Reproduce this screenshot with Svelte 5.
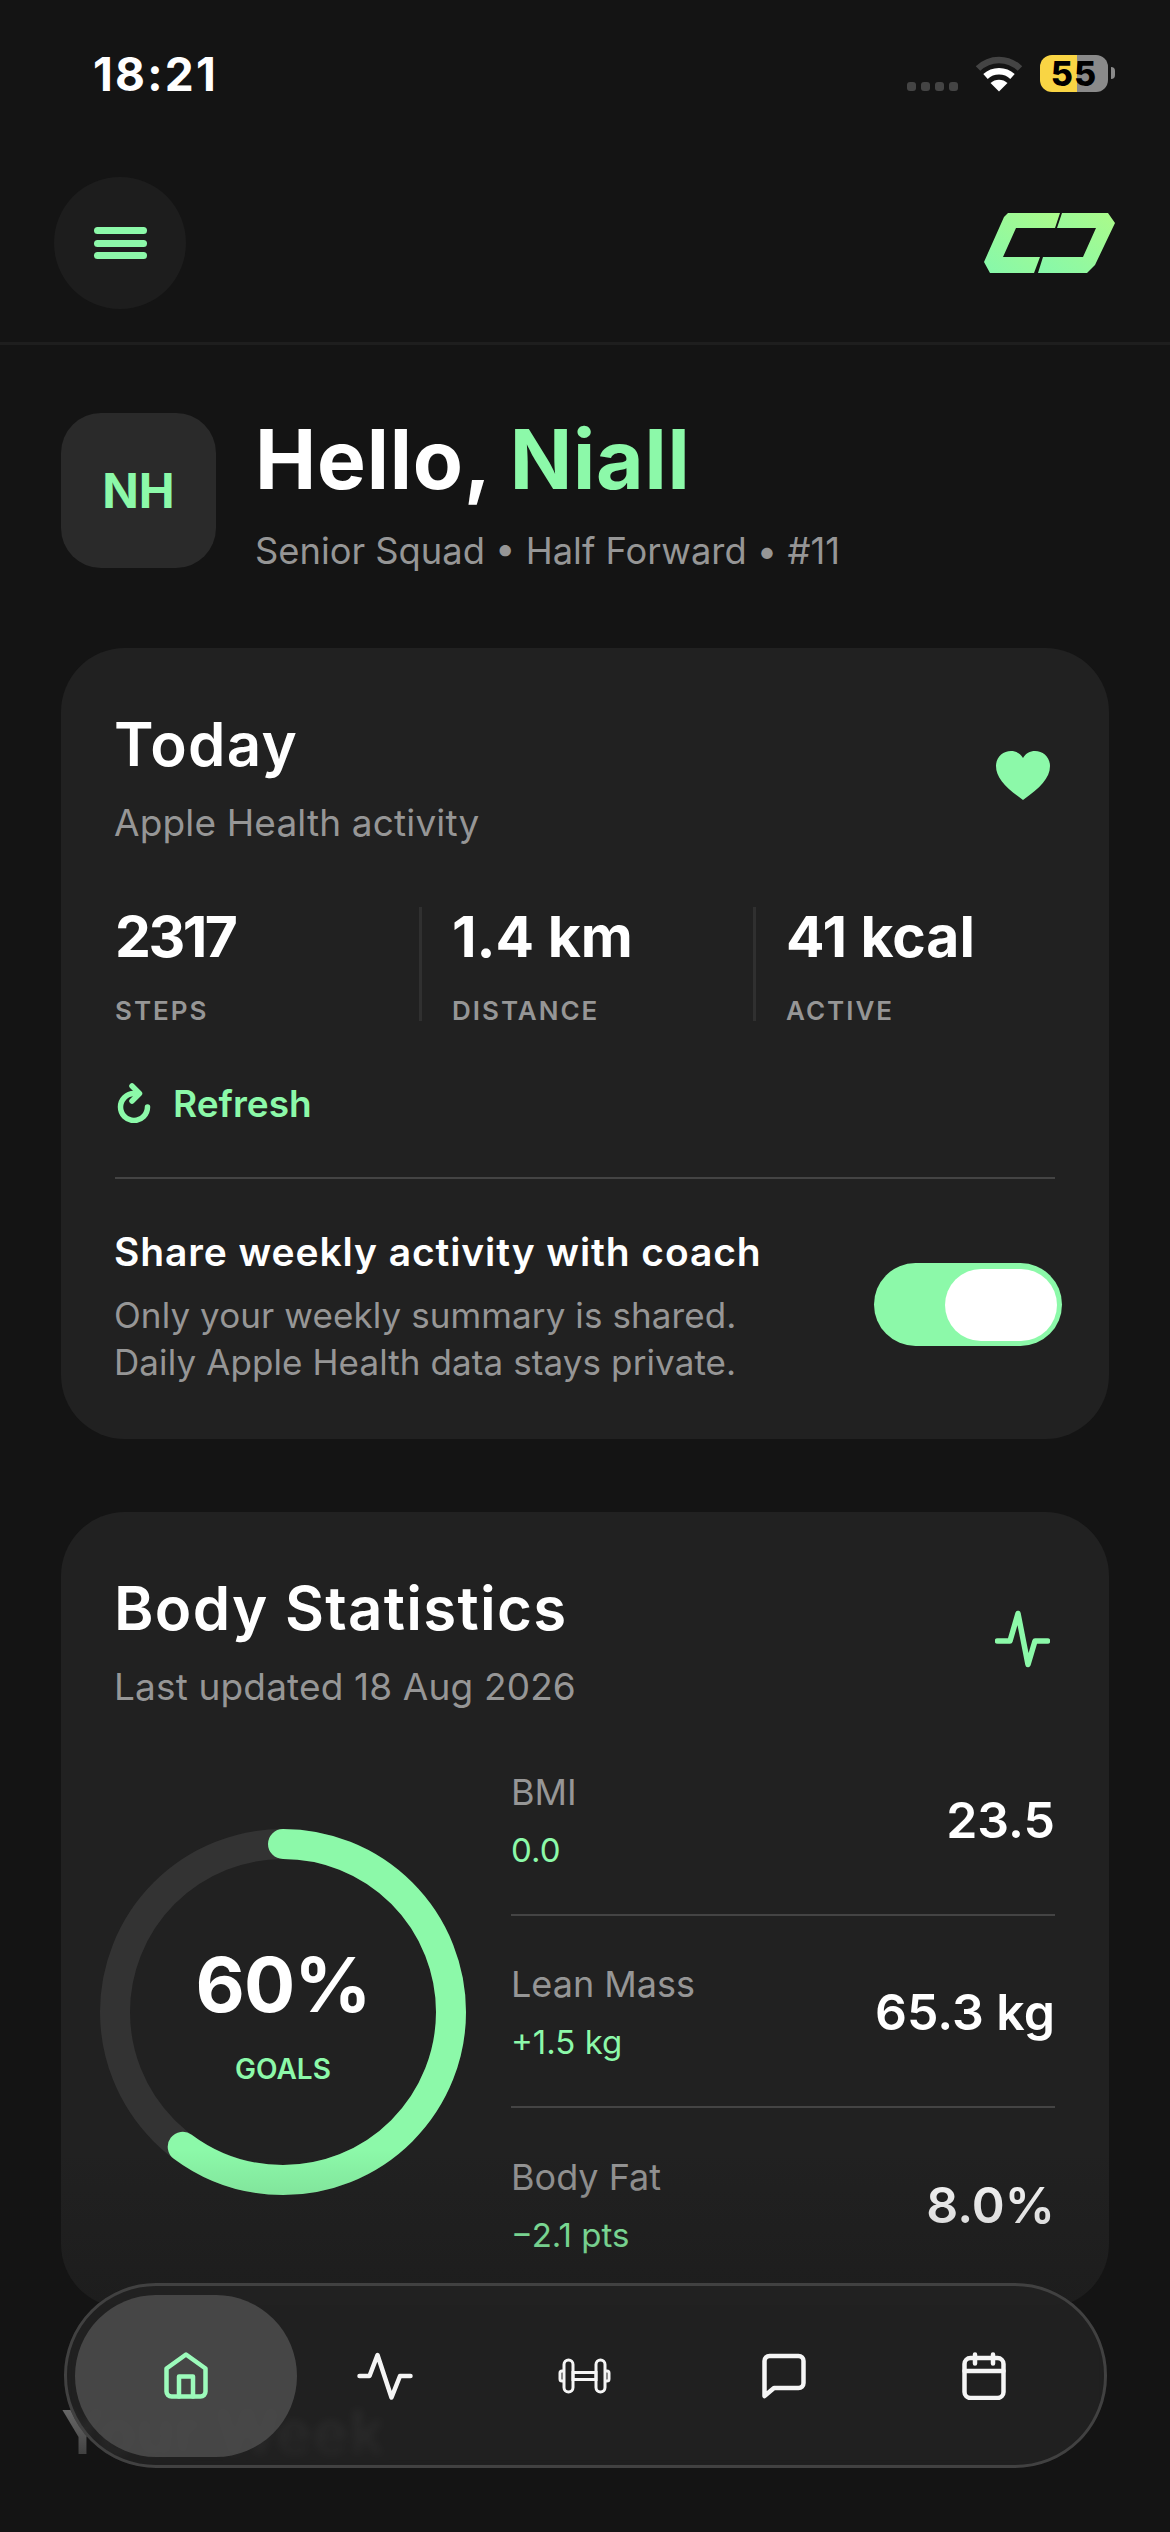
<script>
  const stats = [
    { value: '2317', label: 'STEPS' },
    { value: '1.4 km', label: 'DISTANCE' },
    { value: '41 kcal', label: 'ACTIVE' }
  ];
  const rows = [
    { label: 'BMI', delta: '0.0', value: '23.5' },
    { label: 'Lean Mass', delta: '+1.5 kg', value: '65.3 kg' },
    { label: 'Body Fat', delta: '−2.1 pts', value: '8.0%' }
  ];
</script>

<div class="screen">
  <div class="status">
    <span class="time">18:21</span>
    <div class="status-right">
      <div class="dots"><i></i><i></i><i></i><i></i></div>
      <svg class="wifi" width="48" height="37" viewBox="0 0 48 37" fill="none">
        <path d="M3 13.5C15 2 33 2 45 13.5" stroke="#444" stroke-width="6.5"/>
        <path d="M10.5 21.5C18 14.5 30 14.5 37.5 21.5" stroke="#fff" stroke-width="6.5"/>
        <path d="M24 36.5L15.5 28C20 23.5 28 23.5 32.5 28Z" fill="#fff"/>
      </svg>
      <div class="battery"><b>55</b></div>
      <span class="nub"></span>
    </div>
  </div>

  <header class="top">
    <button class="menu" aria-label="Menu"><i></i><i></i><i></i></button>
    <svg class="logo" width="131" height="60" viewBox="0 0 131 60">
      <defs>
        <linearGradient id="lg" x1="0" y1="1" x2="1" y2="0">
          <stop offset="0" stop-color="#86F8AB"/>
          <stop offset="1" stop-color="#ABFB8A"/>
        </linearGradient>
      </defs>
      <path fill="url(#lg)" d="M24 0H76L71 15H32L19 44H56L50 60H6L0 49L20 4Z"/>
      <path fill="url(#lg)" d="M78 0H124L131 10L111 52L103 60H54L59 44H99L112 15H73Z"/>
    </svg>
  </header>

  <main>
    <section class="hello">
      <div class="avatar">NH</div>
      <div>
        <h1>Hello, <span>Niall</span></h1>
        <p>Senior Squad • Half Forward • #11</p>
      </div>
    </section>

    <section class="card today">
      <div class="head">
        <div>
          <h2>Today</h2>
          <p>Apple Health activity</p>
        </div>
        <svg class="head-icon" width="54" height="49" viewBox="0 0 54 49">
          <path fill="#8CF9A9" d="M27 49C10 37 0 27 0 15C0 6 7 0 15 0C20 0 24.500 2.500 27 7C29.500 2.500 34 0 39 0C47 0 54 6 54 15C54 27 44 37 27 49Z"/>
        </svg>
      </div>

      <div class="stats">
        {#each stats as s}
          <div class="stat">
            <strong>{s.value}</strong>
            <span>{s.label}</span>
          </div>
        {/each}
      </div>

      <div class="refresh">
        <svg width="34" height="40" viewBox="0 0 34 40" fill="none" stroke="#8CF9A9" stroke-width="5.500" stroke-linecap="round" stroke-linejoin="round">
          <path d="M30.500 24A13.500 13.500 0 1 1 17 10.500H20"/>
          <path d="M15 3L22.500 10.500L15 18"/>
        </svg>
        <span>Refresh</span>
      </div>

      <div class="share">
        <div>
          <h3>Share weekly activity with coach</h3>
          <p>Only your weekly summary is shared.<br/>Daily Apple Health data stays private.</p>
        </div>
        <div class="toggle"><i></i></div>
      </div>
    </section>

    <section class="card body">
      <div class="head">
        <div>
          <h2>Body Statistics</h2>
          <p>Last updated 18 Aug 2026</p>
        </div>
        <svg class="head-icon" width="55" height="58" viewBox="0 0 55 58" fill="none" stroke="#8CF9A9" stroke-width="5.500" stroke-linecap="round" stroke-linejoin="round">
          <path d="M2.500 31H15L23 3.500L33 54.500L40 31H52.500"/>
        </svg>
      </div>

      <div class="metrics">
        <div class="gauge">
          <svg width="366" height="366" viewBox="0 0 366 366" fill="none" stroke-width="30">
            <circle cx="183" cy="183" r="168" stroke="#333"/>
            <circle cx="183" cy="183" r="168" stroke="#8CF9A9" stroke-linecap="round" stroke-dasharray="635 1056" transform="rotate(-90 183 183)"/>
          </svg>
          <div class="gauge-text">
            <strong>60%</strong>
            <span>GOALS</span>
          </div>
        </div>
        <div class="rows">
          {#each rows as r}
            <div class="row">
              <div>
                <div class="row-label">{r.label}</div>
                <div class="row-delta">{r.delta}</div>
              </div>
              <div class="row-value">{r.value}</div>
            </div>
          {/each}
        </div>
      </div>
    </section>

    <h2 class="week">Your Week</h2>
    <div class="week-cards"><div></div><div></div></div>
  </main>

  <div class="fade"></div>

  <nav>
    <div class="item active">
      <svg width="44" height="47" viewBox="0 0 44 47" fill="none" stroke="#9CFBBB" stroke-width="4.500" stroke-linecap="round" stroke-linejoin="round">
        <path d="M2.500 16.500L22 2.500L41.500 16.500V39.500A5 5 0 0 1 36.500 44.500H7.500A5 5 0 0 1 2.500 39.500Z"/>
        <path d="M15 44.500V24.500H29V44.500"/>
      </svg>
    </div>
    <div class="item">
      <svg width="56" height="48" viewBox="0 0 56 48" fill="none" stroke="#f5f5f5" stroke-width="4.500" stroke-linecap="round" stroke-linejoin="round">
        <path d="M2.500 24H12.500L20.500 3L34.500 45.500L43 24H53.500"/>
      </svg>
    </div>
    <div class="item">
      <svg width="53" height="36" viewBox="0 0 53 36" fill="none" stroke="#f5f5f5" stroke-width="3">
        <rect x="6" y="2" width="9" height="32" rx="4.500"/>
        <rect x="38" y="2" width="9" height="32" rx="4.500"/>
        <rect x="15" y="14.500" width="23" height="7"/>
        <path d="M6 13H4A2 2 0 0 0 2 15V21A2 2 0 0 0 4 23H6M47 13H49A2 2 0 0 1 51 15V21A2 2 0 0 1 49 23H47"/>
      </svg>
    </div>
    <div class="item">
      <svg width="44" height="46" viewBox="0 0 44 46" fill="none" stroke="#f5f5f5" stroke-width="4.500" stroke-linecap="round" stroke-linejoin="round">
        <path d="M2.500 8A5 5 0 0 1 7.500 3H36.500A5 5 0 0 1 41.500 8V30A5 5 0 0 1 36.500 35H12L2.500 43Z"/>
      </svg>
    </div>
    <div class="item">
      <svg width="44" height="48" viewBox="0 0 44 48" fill="none" stroke="#f5f5f5" stroke-width="4.500" stroke-linecap="round">
        <rect x="2.500" y="6" width="39" height="40" rx="6"/>
        <path d="M2.500 19H41.500M13 2.500V11.500M31 2.500V11.500"/>
      </svg>
    </div>
  </nav>
</div>

<style>
  :global(body) { margin: 0; background: #141414; }
  .screen {
    position: relative;
    width: 1170px;
    height: 2532px;
    overflow: hidden;
    background: #141414;
    color: #fff;
    font-family: Inter, "Noto Sans", sans-serif;
  }
  h1, h2, h3, p { margin: 0; }

  .status {
    height: 177px;
    box-sizing: border-box;
    padding: 52px 55px 0 93px;
    display: flex;
    justify-content: space-between;
    align-items: flex-start;
  }
  .time { font-size: 46px; font-weight: 700; line-height: 44px; letter-spacing: 2.2px; }
  .status-right { display: flex; align-items: flex-start; margin-top: 3px; }
  .dots { display: flex; gap: 5px; margin-top: 27px; margin-right: 17px; }
  .dots i { width: 9px; height: 9px; border-radius: 3px; background: #444; }
  .wifi { margin-right: 17px; }
  .battery {
    width: 68px;
    height: 37px;
    border-radius: 12px;
    background: linear-gradient(90deg, #F9D544 0 37px, #8A8A8A 37px);
    display: flex;
    align-items: center;
    justify-content: center;
    color: #000;
  }
  .battery b { font-size: 34px; line-height: 37px; font-weight: 800; letter-spacing: 1px; }
  .nub { width: 4px; height: 12px; margin: 12px 0 0 3px; background: #8a8a8a; border-radius: 0 6px 6px 0; }

  .top {
    height: 168px;
    box-sizing: border-box;
    padding: 0 55px 36px 54px;
    border-bottom: 3px solid #1e1e1e;
    display: flex;
    align-items: flex-start;
    justify-content: space-between;
  }
  .menu {
    width: 132px;
    height: 132px;
    border: 0;
    padding: 0;
    border-radius: 50%;
    background: #1D1D1D;
    display: flex;
    flex-direction: column;
    align-items: center;
    justify-content: center;
    gap: 5.5px;
  }
  .menu i { width: 53px; height: 7px; border-radius: 3.5px; background: #8CF9A9; }
  .logo { margin-top: 36px; }

  main { padding: 68px 61px 0; }

  .hello { display: flex; gap: 39px; align-items: flex-start; height: 155px; margin-bottom: 80px; }
  .avatar {
    width: 155px;
    height: 155px;
    flex: none;
    border-radius: 40px;
    background: #2A2A2A;
    color: #8CF9A9;
    font-size: 48px;
    font-weight: 700;
    display: flex;
    align-items: center;
    justify-content: center;
  }
  .hello h1 { font-size: 82px; font-weight: 700; line-height: 96px; margin-top: -1px; letter-spacing: 0.8px; }
  .hello h1 span { color: #8CF9A9; }
  .hello p { font-size: 36.300px; line-height: 50px; margin-top: 18px; color: #969696; }

  .card {
    background: #212121;
    border-radius: 64px;
    padding: 54px 54px 0;
  }
  .today { height: 791px; box-sizing: border-box; margin-bottom: 73px; }
  .body { height: 796px; box-sizing: border-box; }

  .head { display: flex; justify-content: space-between; align-items: center; }
  .head h2 { font-size: 60px; font-weight: 600; line-height: 84px; letter-spacing: 1.3px; margin-left: -1px; }
  .head p { font-size: 37px; line-height: 50px; margin-top: 12px; letter-spacing: 0.15px; color: #969696; margin-left: -1px; }
  .head-icon { margin-right: 5px; }

  .stats { display: grid; grid-template-columns: 304px 334px 1fr; margin-top: 59px; }
  .stat { height: 114px; display: flex; flex-direction: column; padding-left: 30px; border-left: 3px solid #303030; }
  .stat:first-child { padding-left: 0; border-left: 0; }
  .stat strong { font-size: 57px; line-height: 60px; font-weight: 700; }
  .stat:first-child strong { letter-spacing: -2.500px; }
  .stat span { font-size: 26px; line-height: 30px; margin-top: 29px; font-weight: 600; letter-spacing: 2px; color: #969696; }

  .refresh { display: flex; align-items: center; gap: 22px; margin-top: 60px; height: 44px; padding-left: 2px; }
  .refresh span { font-size: 37px; font-weight: 600; color: #8CF9A9; }

  .share {
    margin-top: 52px;
    padding-top: 48px;
    border-top: 2px solid #444;
    display: flex;
    justify-content: space-between;
    align-items: center;
  }
  .share h3 { font-size: 39px; line-height: 50px; font-weight: 600; letter-spacing: 0.9px; margin-left: -1px; }
  .share p { font-size: 35px; line-height: 47px; margin-top: 15px; letter-spacing: 0.1px; color: #969696; margin-left: -1px; }
  .toggle {
    width: 188px;
    height: 83px;
    margin: -4px -7px 0 0;
    flex: none;
    border-radius: 42px;
    background: #8CF9A9;
    display: flex;
    align-items: center;
    justify-content: flex-end;
    padding-right: 5px;
    box-sizing: border-box;
  }
  .toggle i { width: 112px; height: 72px; border-radius: 36px; background: #fff; }

  .metrics { display: flex; align-items: center; gap: 45px; margin-top: 12px; }
  .gauge { position: relative; width: 366px; height: 366px; margin-left: -15px; flex: none; }
  .gauge svg { display: block; }
  .gauge-text { position: absolute; inset: 0; display: flex; flex-direction: column; align-items: center; justify-content: center; }
  .gauge-text strong { font-size: 76px; line-height: 90px; font-weight: 700; margin-top: 2px; letter-spacing: -1px; }
  .gauge-text span { font-size: 28px; line-height: 36px; margin-top: 22px; font-weight: 600; color: #8CF9A9; }

  .rows { flex: 1; }
  .row {
    display: flex;
    justify-content: space-between;
    align-items: center;
    padding: 46px 0 42px;
    height: 192px;
    box-sizing: border-box;
    border-bottom: 2px solid #444;
  }
  .row:last-child { border-bottom: 0; }
  .row-label { font-size: 36px; line-height: 46px; color: #969696; }
  .row-delta { font-size: 33px; line-height: 46px; margin-top: 12px; color: #8CF9A9; }
  .row-value { font-size: 50px; font-weight: 600; margin-top: -3px; }

  .week { font-size: 60px; font-weight: 600; line-height: 84px; margin-top: 82px; letter-spacing: 1.3px; }
  .week-cards { display: grid; grid-template-columns: 1fr 1fr; gap: 30px; margin-top: 30px; }
  .week-cards div { height: 200px; background: #212121; border-radius: 64px; }

  .fade {
    position: absolute;
    left: 0;
    right: 0;
    bottom: 0;
    height: 382px;
    background: linear-gradient(180deg, rgba(20,20,20,0) 0%, rgba(20,20,20,.3) 40%, rgba(20,20,20,.72) 74%, #141414 92%);
  }

  nav {
    position: absolute;
    left: 64px;
    top: 2283px;
    width: 1043px;
    height: 185px;
    box-sizing: border-box;
    border: 3px solid #414141;
    border-radius: 92px;
    background: rgba(34,34,34,.85);
    backdrop-filter: blur(4px);
    display: grid;
    grid-template-columns: repeat(5, 199.500px);
    padding-left: 19px;
  }
  .item { position: relative; display: flex; align-items: center; justify-content: center; }
  .item svg { position: relative; }
  .active::before {
    content: "";
    position: absolute;
    left: -11px;
    right: -11px;
    top: 9px;
    bottom: 8px;
    border-radius: 81px;
    background: rgba(78,78,78,.85);
  }
</style>
